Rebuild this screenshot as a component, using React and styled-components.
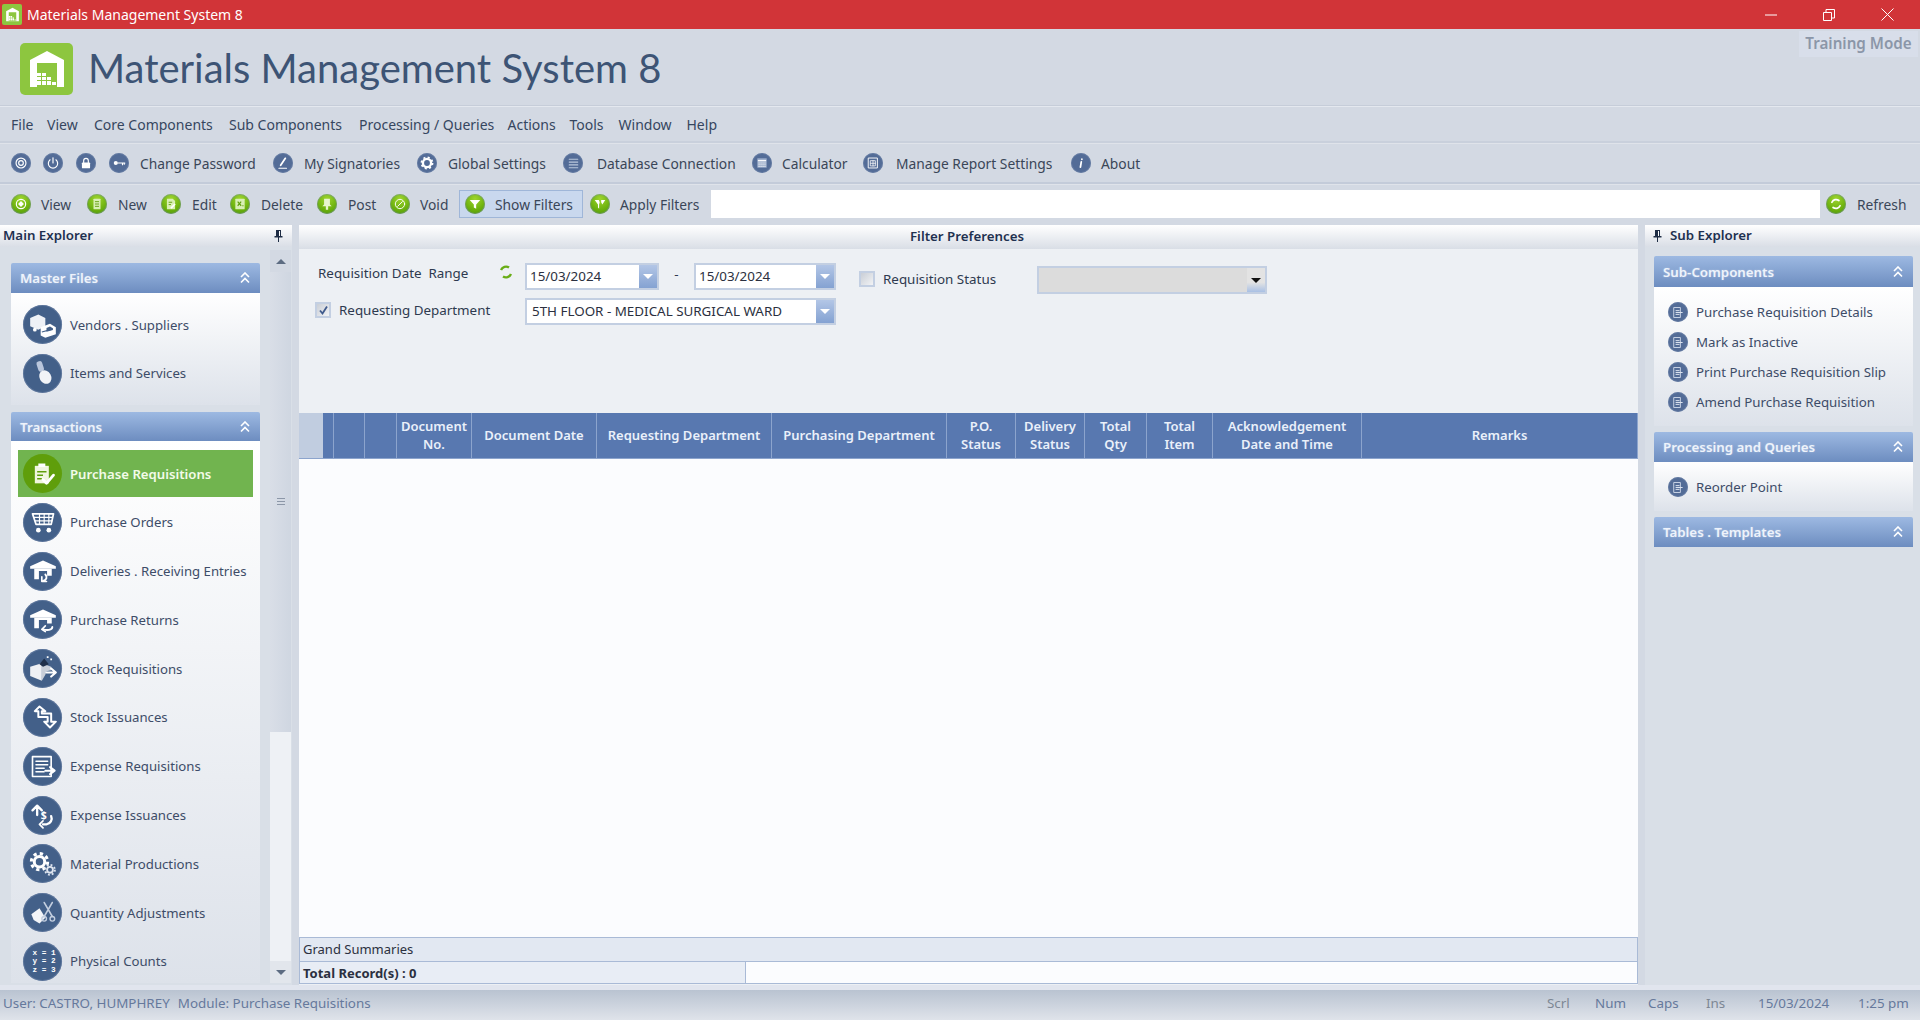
import styled, { createGlobalStyle } from "styled-components";

const GlobalStyle = createGlobalStyle`
  * { box-sizing: border-box; }
  html, body { margin: 0; padding: 0; height: 100%; overflow: hidden; }
  body { font-family: "Noto Sans", "Open Sans", sans-serif; font-size: 14px; color: #3c4a60; background: #d3d9e3; }
`;

const Shell = styled.div`
  display: flex;
  flex-direction: column;
  width: 1920px;
  height: 1020px;
  overflow: hidden;
`;

const TitleBar = styled.div`
  display: flex;
  align-items: center;
  height: 29px;
  flex: none;
  padding-left: 2px;
  background: #d13438;
  color: #fff;
  font-size: 14px;
`;

const TitleIcon = styled.span`
  width: 20px;
  height: 21px;
  margin-right: 5px;
  border-radius: 2px;
  background: #8dc63f;
  display: flex;
  align-items: center;
  justify-content: center;
`;

const WindowControls = styled.div`
  display: flex;
  margin-left: auto;
  padding-right: 26px;
  gap: 46px;
  align-items: center;
`;

const Header = styled.header`
  display: flex;
  align-items: flex-start;
  height: 77px;
  flex: none;
  border-bottom: 1px solid #c6cdd9;
`;

const Logo = styled.div`
  width: 53px;
  height: 52px;
  margin: 14px 15px 0 20px;
  border-radius: 5px;
  background: #8dc63f;
  display: flex;
  align-items: center;
  justify-content: center;
`;

const AppName = styled.h1`
  margin: 13px 0 0;
  font-family: "Lato", sans-serif;
  font-weight: 400;
  font-size: 40px;
  line-height: 52px;
  color: #3d5475;
  white-space: nowrap;
`;

const TrainingMode = styled.div`
  margin: 2px 2px 0 auto;
  width: 119px;
  height: 26px;
  background: #d8deea;
  color: #8b96a8;
  font-size: 15.2px;
  font-weight: 600;
  line-height: 25px;
  text-align: center;
  white-space: nowrap;
`;

const MenuBar = styled.nav`
  display: flex;
  align-items: center;
  height: 37px;
  flex: none;
  padding: 0 0 0 11px;
  border-top: 1px solid #e4e8ef;
  border-bottom: 2px solid #c9d0dc;
`;

const MenuItem = styled.span`
  width: ${({ $w }) => $w}px;
  flex: none;
  white-space: nowrap;
  color: #36465f;
`;

const ToolBar = styled.div`
  display: flex;
  align-items: center;
  height: ${({ $h }) => $h}px;
  flex: none;
  padding: 0 0 ${({ $under }) => $under ?? 0}px 11px;
  border-top: 1px solid #dfe3ea;
  border-bottom: ${({ $line }) => ($line ? "2px solid #c3cbd9" : "none")};
  font-size: 13.8px;
`;

const ToolButton = styled.div`
  display: flex;
  align-items: center;
  flex: none;
  width: ${({ $w }) => ($w ? `${$w}px` : "auto")};
  padding-left: ${({ $left }) => $left ?? 0}px;
  gap: ${({ $gap }) => $gap ?? 11}px;
  white-space: nowrap;
  color: #3a4658;
`;

const FilterToggle = styled(ToolButton)`
  width: 124px;
  height: 28px;
  padding-left: 5px;
  gap: 10px;
  background: #c9d8ee;
  border: 1px solid #9fb6d8;
`;

const SearchBox = styled.div`
  flex: 1;
  height: 28px;
  background: #fff;
`;

const Disc = styled.span`
  flex: none;
  display: inline-flex;
  align-items: center;
  justify-content: center;
  width: ${({ $size }) => $size ?? 20}px;
  height: ${({ $size }) => $size ?? 20}px;
  border-radius: 50%;
  background: ${({ $tone }) =>
    $tone === "green"
      ? "radial-gradient(circle at 50% 25%, #9ed52f 0%, #6fb310 55%, #4b9505 100%)"
      : $tone === "active"
        ? "#5f9e0b"
        : $tone === "big"
          ? "#436089"
          : "#536c97"};
  box-shadow: ${({ $tone }) => ($tone === "active" ? "none" : "0 0 0 1px rgba(120, 140, 175, 0.45) inset")};
`;

const Workspace = styled.div`
  display: flex;
  height: 760px;
  flex: none;
  gap: 7px;
`;

const SidePanel = styled.aside`
  display: flex;
  flex-direction: column;
  flex: none;
  width: ${({ $w }) => $w}px;
  background: #d9dfe7;
`;

const PanelHead = styled.div`
  display: flex;
  align-items: center;
  justify-content: ${({ $center }) => ($center ? "center" : "flex-start")};
  height: ${({ $h }) => $h ?? 22}px;
  flex: none;
  padding: 0 ${({ $right }) => $right ?? 3}px 2px ${({ $pad }) => $pad ?? 3}px;
  gap: 8px;
  background: linear-gradient(#ffffff, #d9dee6);
  color: #1f3150;
  font-size: 13.3px;
  font-weight: 600;
`;

const PinSlot = styled.span`
  display: flex;
  margin-left: ${({ $end }) => ($end ? "auto" : 0)};
  margin-right: ${({ $end }) => ($end ? "6px" : 0)};
`;

const LeftBody = styled.div`
  display: flex;
  flex: 1;
  min-height: 0;
`;

const GroupColumn = styled.div`
  width: 249px;
  margin: 16px 10px 0 11px;
  flex: none;
  display: flex;
  flex-direction: column;
  gap: 7px;
`;

const SubGroupColumn = styled(GroupColumn)`
  width: 259px;
  margin: 9px 0 0 9px;
  gap: 6px;
`;

const GroupHead = styled.div`
  display: flex;
  align-items: center;
  justify-content: space-between;
  height: ${({ $h }) => $h ?? 30}px;
  flex: none;
  padding: 0 10px 0 9px;
  border-radius: 2px 2px 0 0;
  background: linear-gradient(#9db9e2, #6d8dc0);
  color: #eef3fb;
  font-size: 13.3px;
  font-weight: 600;
  text-shadow: 0 0 2px rgba(255, 255, 255, 0.35);
`;

const GroupBody = styled.div`
  height: ${({ $h }) => $h}px;
  padding-top: ${({ $top }) => $top}px;
  background: linear-gradient(#ffffff, #dde2ea);
  overflow: hidden;
`;

const NavItem = styled.div`
  display: flex;
  align-items: center;
  height: 47px;
  margin: 0 7px 1.8px;
  padding-left: 5px;
  gap: 8px;
  font-size: 13.2px;
  white-space: nowrap;
  background: ${({ $active }) => ($active ? "#71b44f" : "transparent")};
  color: ${({ $active }) => ($active ? "#f3fbe9" : "#3d4c68")};
  font-weight: ${({ $active }) => ($active ? 600 : 400)};
`;

const SubItem = styled.div`
  display: flex;
  align-items: center;
  height: 30px;
  padding-left: 14px;
  gap: 8px;
  font-size: 13.3px;
  white-space: nowrap;
  color: #3d4c68;
`;

const ScrollBar = styled.div`
  display: flex;
  flex-direction: column;
  width: 21px;
  flex: none;
  margin: 3px 0 2px;
`;

const ScrollArrow = styled.div`
  height: 22px;
  flex: none;
  display: flex;
  align-items: center;
  justify-content: center;
  background: ${({ $down }) => ($down ? "#e2e6ec" : "#d3d9e3")};
  &::after {
    content: "";
    border-left: 5px solid transparent;
    border-right: 5px solid transparent;
    ${({ $down }) => ($down ? "border-top: 5px solid #5d6c82;" : "border-bottom: 5px solid #5d6c82;")}
  }
`;

const ScrollThumb = styled.div`
  height: 460px;
  flex: none;
  display: flex;
  align-items: center;
  justify-content: center;
  background: linear-gradient(90deg, #d9dee7, #cfd6e1);
`;

const ThumbGrip = styled.span`
  width: 8px;
  height: 8px;
  background: repeating-linear-gradient(#8c97a8 0 1px, transparent 1px 3px);
`;

const ScrollTrack = styled.div`
  flex: 1;
  background: #eef1f5;
`;

const CenterPanel = styled.main`
  display: flex;
  flex-direction: column;
  flex: none;
  width: 1339px;
  padding-bottom: 1px;
  background: #edf0f4;
`;

const FilterForm = styled.div`
  height: 164px;
  flex: none;
  padding-top: 14px;
  font-size: 13.4px;
  color: #2e3a4f;
`;

const FilterRow = styled.div`
  display: flex;
  align-items: flex-start;
  height: ${({ $h }) => $h}px;
  padding-left: ${({ $left }) => $left}px;
`;

const Caption = styled.label`
  flex: none;
  width: ${({ $w }) => $w}px;
  margin-top: ${({ $top }) => $top ?? 0}px;
  line-height: 20px;
  white-space: nowrap;
`;

const Spinner = styled.span`
  flex: none;
  display: flex;
  width: 16px;
  height: 16px;
  margin: 1px 11px 0 0;
`;

const Combo = styled.div`
  display: flex;
  flex: none;
  width: ${({ $w }) => $w}px;
  height: ${({ $h }) => $h ?? 27}px;
  margin-top: ${({ $top }) => $top ?? 0}px;
  border: 2px solid #c3cfe2;
  background: ${({ $off }) => ($off ? "#dcdcdc" : "#fff")};
`;

const ComboText = styled.span`
  flex: 1;
  padding-left: ${({ $pad }) => $pad ?? 3}px;
  line-height: 23px;
  white-space: nowrap;
  overflow: hidden;
  color: #2b3040;
`;

const ComboButton = styled.span`
  width: 18px;
  flex: none;
  display: flex;
  align-items: center;
  justify-content: center;
  background: ${({ $off }) => ($off ? "linear-gradient(#e3e3e3 60%, #a9c0e4)" : "linear-gradient(#b3c6e6, #84a2d2)")};
  &::after {
    content: "";
    border-left: 5px solid transparent;
    border-right: 5px solid transparent;
    border-top: 5px solid ${({ $off }) => ($off ? "#111" : "#fff")};
  }
`;

const Dash = styled.span`
  width: 35px;
  flex: none;
  text-align: center;
  line-height: 22px;
`;

const Check = styled.span`
  flex: none;
  display: flex;
  align-items: center;
  justify-content: center;
  width: 16px;
  height: 16px;
  margin: ${({ $top }) => $top ?? 0}px ${({ $right }) => $right}px 0 ${({ $left }) => $left ?? 0}px;
  border: 2px solid #c3cfe2;
  background: linear-gradient(135deg, #c9ced6, #f2f3f5);
`;

const GridHead = styled.div`
  display: grid;
  grid-template-columns: 24px 11px 31px 32px 75px 125px 175px 175px 69px 69px 62px 66px 149px 1fr;
  height: 46px;
  flex: none;
`;

const HeadCell = styled.div`
  display: flex;
  align-items: center;
  justify-content: center;
  background: ${({ $gutter }) => ($gutter ? "#c1cde0" : "#5878b0")};
  border-right: ${({ $gutter }) => ($gutter ? "none" : "1px solid #8ca4cd")};
  border-bottom: 1px solid #8ca4cd;
  color: #eaf0fa;
  font-size: 13px;
  font-weight: 600;
  line-height: 17.5px;
  text-align: center;
  white-space: pre-line;
`;

const GridBody = styled.div`
  flex: 1;
  background: #fbfcfe;
`;

const SummaryRow = styled.div`
  display: flex;
  flex: none;
  height: ${({ $h }) => $h}px;
  border: 1px solid #a9bad6;
  border-top: ${({ $open }) => ($open ? "none" : "1px solid #a9bad6")};
  background: ${({ $fill }) => $fill};
  font-size: 13px;
  color: #2b3040;
  line-height: 22px;
`;

const SummaryLabel = styled.span`
  width: ${({ $w }) => ($w ? `${$w}px` : "auto")};
  padding-left: 3px;
  font-weight: ${({ $bold }) => ($bold ? 700 : 400)};
  white-space: nowrap;
`;

const SummaryValue = styled.span`
  flex: 1;
  background: #fbfcfe;
  border-left: 1px solid #a9bad6;
`;

const FooterGap = styled.div`
  height: 5px;
  flex: none;
  background: #e1e5ee;
`;

const StatusBar = styled.footer`
  display: flex;
  align-items: center;
  height: 30px;
  flex: none;
  padding: 0 0 4px 3px;
  background: linear-gradient(#b9c3d1, #dfe3ea);
  font-size: 13.4px;
  white-space: nowrap;
`;

const StatusCell = styled.span`
  flex: none;
  width: ${({ $w }) => ($w ? `${$w}px` : "auto")};
  margin-left: ${({ $ml }) => $ml ?? 0}px;
  color: ${({ $dim }) => ($dim ? "#7d8794" : "#66799c")};
`;

const StatusPush = styled.span`
  flex: 1;
`;

const W = { fill: "none", stroke: "#fff", strokeWidth: 2, strokeLinecap: "round", strokeLinejoin: "round" };

const Glyph = ({ size = 14, children }) => (
  <svg width={size} height={size} viewBox="0 0 24 24" aria-hidden="true">
    {children}
  </svg>
);

const glyphs = {
  target: <><circle cx="12" cy="12" r="8.5" {...W} /><circle cx="12" cy="12" r="4" {...W} /></>,
  power: <><path d="M7 6.5a8 8 0 1 0 10 0" {...W} /><path d="M12 3v9" {...W} /></>,
  lock: <><path d="M8 11V8a4 4 0 0 1 8 0v3" {...W} /><rect x="5" y="11" width="14" height="10" rx="1.5" fill="#fff" /></>,
  key: <><circle cx="6.5" cy="12" r="3.5" fill="#fff" /><path d="M10 12h12M18 12v3M21 12v2" {...W} /></>,
  pen: <><path d="M8 16L16 4" {...W} strokeWidth="3" /><path d="M5 21h13" {...W} /></>,
  gear: <><circle cx="12" cy="12" r="7" fill="none" stroke="#fff" strokeWidth="4" /><circle cx="12" cy="12" r="9.5" fill="none" stroke="#fff" strokeWidth="3" strokeDasharray="3.5 3.96" /></>,
  lines: <path d="M6 6h12M6 10h12M6 14h12M6 18h12" {...W} strokeWidth="1.6" stroke="#b9c6dc" />,
  calc: <><rect x="4" y="4" width="16" height="16" fill="#9fb0cc" /><path d="M5 8h14" stroke="#fff" strokeWidth="2" /><path d="M6 12h12M6 15h12M6 18h12" stroke="#fff" strokeWidth="1.4" strokeDasharray="2 1.4" /></>,
  report: <><rect x="4.5" y="3.5" width="15" height="17" {...W} strokeWidth="1.6" /><path d="M8 8h8v9H8zM8 12.5h8M12 8v9" {...W} strokeWidth="1.3" /></>,
  info: <path d="M13.5 5.5v.2M12.5 10l-1.5 9" {...W} strokeWidth="3" />,
  diamond: <><circle cx="12" cy="12" r="8" {...W} /><path d="M12 7l5 5-5 5-5-5z" fill="#fff" /></>,
  doc: <><rect x="6" y="3" width="12" height="18" rx="1" fill="#d9efb4" /><path d="M8.5 8h7M8.5 12h7M8.5 16h7" stroke="#5f9e0b" strokeWidth="1.6" /></>,
  edit: <><path d="M5 3h10l4 4v14H5z" fill="#d9efb4" /><path d="M8 9h6M8 13h4" stroke="#5f9e0b" strokeWidth="1.6" /><path d="M12 19l7-7" stroke="#fff" strokeWidth="3" /></>,
  cross: <><rect x="4" y="3" width="16" height="18" rx="1" fill="#d9efb4" /><path d="M8 8l6 7M14 8l-6 7" stroke="#5f9e0b" strokeWidth="2" /><path d="M16 15h2" stroke="#5f9e0b" strokeWidth="2" /></>,
  pin: <path d="M7 3h10v10l3 3H14v6h-4v-6H4l3-3z" fill="#e8f5cf" />,
  slash: <><circle cx="12" cy="12" r="8" {...W} strokeWidth="1.6" /><path d="M8 16l8-8" {...W} strokeWidth="1.6" /></>,
  funnel: <path d="M3 5h18l-7 8v7l-4-2v-5z" fill="#fff" />,
  apply: <path d="M3 5h7l1.5 4-1 4v7l-2-2v-5zM14 5h7l-5 8-2-4z" fill="#fff" />,
  refresh: <><path d="M5 9a8 8 0 0 1 12-3" {...W} strokeWidth="3" /><path d="M19 15a8 8 0 0 1-12 3" {...W} strokeWidth="3" /></>,
  subdoc: <><path d="M5 4h10v16H5z" {...W} stroke="#c4cfe2" strokeWidth="1.6" /><path d="M8 9h5M8 12h10M8 15h5" {...W} stroke="#dbe3ef" strokeWidth="1.6" /></>,
  truck: <><path d="M1 6l7-3 6 3v7l-6 3-7-3z" fill="#eef1f6" /><path d="M10 14l8-3 5 3v6l-9 3-4-2z" fill="#fff" /><path d="M15 14.5l3-1.2 2.5 1.500v1.500l-5.500 1.500z" fill="#436089" /><circle cx="5" cy="16" r="1.6" fill="#fff" /><path d="M11 18l9-2.5" stroke="#436089" strokeWidth="1" /></>,
  items: <><rect x="7" y="2" width="5" height="9" rx="2" transform="rotate(-18 9 6)" fill="#b9c6dc" /><ellipse cx="14" cy="15.5" rx="5" ry="6" transform="rotate(-30 14 15.5)" fill="#f1f3f7" /></>,
  clip: <><path d="M5 5h12v15H5z" fill="#f0f6df" /><rect x="8" y="3" width="6" height="3" fill="#fff" /><path d="M7 10h8M7 13h5M7 16h4" stroke="#5f9e0b" strokeWidth="1.3" /><path d="M12 17l3 3 6-7" {...W} strokeWidth="2.4" /></>,
  cart: <><path d="M3 5h18l-2 9H6z" {...W} strokeWidth="1.5" /><path d="M4 8h16M5 11h15M9 5v9M13 5v9M17 5v9" stroke="#fff" strokeWidth="1" /><circle cx="8" cy="19" r="2" fill="#fff" /><circle cx="17" cy="19" r="2" fill="#fff" /></>,
  dock: <><path d="M1 8l11-5 11 5v2H1z" fill="#fff" /><path d="M4.500 10v9h4V12h7v4h4v-6" fill="#fff" /><path d="M14 15c2 2 1 5-2 5.500" {...W} strokeWidth="1.600" /><path d="M11 17v4h4" {...W} strokeWidth="1.400" /></>,
  dockback: <><path d="M1 8l11-5 11 5v2H1z" fill="#fff" /><path d="M4.500 10v9h4V12h7v3h4v-5" fill="#fff" /><path d="M20 18c0 3-5 3-8 2" {...W} strokeWidth="1.600" /><path d="M14 17l-3 3 3 2" {...W} strokeWidth="1.400" /></>,
  box: <><path d="M1 10l10-3v15L1 18z" fill="#eef0f4" /><path d="M11 7l8 3v3l-4 1-1 3-3 5z" fill="#c9cfd9" /><path d="M9 8l4-5 4 5-5 2z" fill="#1f2f4a" /><path d="M16 1v1.500M19 3v1.500" stroke="#fff" strokeWidth="1.5" /><path d="M15 15h8M19 11.5l4 3.500-4 3.500" {...W} strokeWidth="1.8" /></>,
  swap: <path d="M9 3L5 7h3v5h8v4h-3l5 5 5-5h-4v-7H11V7h3z" fill="none" stroke="#fff" strokeWidth="1.7" strokeLinejoin="round" />,
  form: <><rect x="3" y="4" width="16" height="17" {...W} strokeWidth="1.4" /><path d="M6 8h10M6 11h10M6 14h7M6 17h7" {...W} strokeWidth="1.3" /><path d="M14 16h6M18 13l4 3-4 3" {...W} strokeWidth="1.7" /></>,
  money: <><path d="M7 12V5M3 8l4-4 4 4" {...W} /><path d="M12 20h3a5 5 0 0 0 4-7" {...W} /><path d="M12 17l-3 3 3 3" {...W} strokeWidth="1.5" /><text x="10" y="15" fontSize="9" fontWeight="700" fill="#fff" fontFamily="Noto Sans, sans-serif">$</text></>,
  gears: <><circle cx="9" cy="10" r="4.5" fill="none" stroke="#fff" strokeWidth="2.6" /><circle cx="9" cy="10" r="7" fill="none" stroke="#fff" strokeWidth="2.6" strokeDasharray="2.8 2.7" /><circle cx="18" cy="17" r="2.5" fill="none" stroke="#dfe5ef" strokeWidth="1.6" /><circle cx="18" cy="17" r="4.2" fill="none" stroke="#dfe5ef" strokeWidth="1.6" strokeDasharray="1.6 1.7" /></>,
  scissors: <><path d="M2 13l7-5 5 8-5 5-5-3z" fill="#f2f4f8" /><path d="M13 3l7 12M20 3l-7 12" {...W} stroke="#c3cedf" strokeWidth="1.3" /><circle cx="13" cy="17" r="2" {...W} stroke="#c3cedf" strokeWidth="1.2" /><circle cx="20" cy="17" r="2" {...W} stroke="#c3cedf" strokeWidth="1.2" /></>,
  counts: <g fill="#fff" fontSize="6.6" fontFamily="Liberation Mono, monospace" fontWeight="700"><text x="3" y="7">x = 1</text><text x="3" y="14">y = 2</text><text x="3" y="21">z = 3</text></g>,
};

const Icon = ({ name, tone, size, scale = 0.7 }) => (
  <Disc $tone={tone} $size={size}>
    <Glyph size={Math.round((size ?? 20) * scale)}>{glyphs[name]}</Glyph>
  </Disc>
);

const Warehouse = ({ size }) => (
  <svg width={size} height={size} viewBox="0 0 40 40" aria-hidden="true">
    <path d="M3 11L20 2l17 9v27H3z" fill="#fff" />
    <path d="M10 14h20v24H10z" fill="#8dc63f" />
    <path d="M10 24h4v3h-4zM15 24h4v3h-4zM10 28h4v3h-4zM15 28h4v3h-4zM20 28h4v3h-4zM10 32h4v4h-4zM15 32h4v4h-4zM20 32h4v4h-4zM25 33h4v3h-4z" fill="#fff" />
  </svg>
);

const Pin = () => (
  <svg width="9" height="13" viewBox="0 0 9 13" aria-hidden="true">
    <path d="M2 1h5v6h1.500v1.500h-8V7H2zM4 8.500h1V13H4z" fill="#1f2d45" />
    <path d="M5.500 2v5" stroke="#fff" strokeWidth="1" />
  </svg>
);

const Chevrons = () => (
  <svg width="10" height="12" viewBox="0 0 10 12" aria-hidden="true">
    <path d="M1 5l4-4 4 4M1 10.500l4-4 4 4" fill="none" stroke="#fff" strokeWidth="1.6" />
  </svg>
);

const SmallSpinner = () => (
  <svg width="16" height="16" viewBox="0 0 16 16" aria-hidden="true">
    <path d="M3 6a5.500 5.500 0 0 1 8-2.500M13 10a5.500 5.500 0 0 1-8 2.500" fill="none" stroke="#69ad16" strokeWidth="2.4" />
  </svg>
);

const menu = [
  ["File", 36], ["View", 47], ["Core Components", 135], ["Sub Components", 130],
  ["Processing / Queries", 148.5], ["Actions", 62], ["Tools", 49], ["Window", 68], ["Help", 60],
];

const systemTools = [
  { icon: "target", w: 32 }, { icon: "power", w: 33 }, { icon: "lock", w: 33 },
  { icon: "key", label: "Change Password", w: 164 },
  { icon: "pen", label: "My Signatories", w: 144 },
  { icon: "gear", label: "Global Settings", w: 146 },
  { icon: "lines", label: "Database Connection", w: 189, gap: 14, scale: 0.85 },
  { icon: "calc", label: "Calculator", w: 111, gap: 10 },
  { icon: "report", label: "Manage Report Settings", w: 208, gap: 13 },
  { icon: "info", label: "About", gap: 10 },
];

const recordTools = [
  { icon: "diamond", label: "View", w: 76, gap: 10 },
  { icon: "doc", label: "New", w: 74 },
  { icon: "edit", label: "Edit", w: 69 },
  { icon: "cross", label: "Delete", w: 87 },
  { icon: "pin", label: "Post", w: 73 },
  { icon: "slash", label: "Void", w: 69, gap: 10 },
];

const masterFiles = [
  ["truck", "Vendors . Suppliers"],
  ["items", "Items and Services"],
];

const transactions = [
  ["clip", "Purchase Requisitions", true],
  ["cart", "Purchase Orders"],
  ["dock", "Deliveries . Receiving Entries"],
  ["dockback", "Purchase Returns"],
  ["box", "Stock Requisitions"],
  ["swap", "Stock Issuances"],
  ["form", "Expense Requisitions"],
  ["money", "Expense Issuances"],
  ["gears", "Material Productions"],
  ["scissors", "Quantity Adjustments"],
  ["counts", "Physical Counts"],
];

const columns = [
  "", "", "", "", "Document\nNo.", "Document Date", "Requesting Department", "Purchasing Department",
  "P.O.\nStatus", "Delivery\nStatus", "Total\nQty", "Total\nItem", "Acknowledgement\nDate and Time", "Remarks",
];

const subComponents = [
  "Purchase Requisition Details", "Mark as Inactive", "Print Purchase Requisition Slip", "Amend Purchase Requisition",
];

function NavRow({ icon, label, active }) {
  return (
    <NavItem $active={active}>
      <Icon name={icon} tone={active ? "active" : "big"} size={39} scale={0.72} />
      {label}
    </NavItem>
  );
}

function SubRow({ label }) {
  return (
    <SubItem>
      <Icon name="subdoc" size={20} scale={0.75} />
      {label}
    </SubItem>
  );
}

export default function App() {
  return (
    <Shell>
      <GlobalStyle />
      <TitleBar>
        <TitleIcon>
          <Warehouse size={15} />
        </TitleIcon>
        Materials Management System 8
        <WindowControls>
          <svg width="12" height="12" viewBox="0 0 12 12" aria-hidden="true">
            <path d="M0 6h12" stroke="#fff" strokeWidth="1" />
          </svg>
          <svg width="12" height="12" viewBox="0 0 12 12" aria-hidden="true">
            <path d="M.5 3.500h8v8h-8zM3 3.500V.5h8.500V9H8.500" fill="none" stroke="#fff" strokeWidth="1" />
          </svg>
          <svg width="13" height="13" viewBox="0 0 13 13" aria-hidden="true">
            <path d="M.5.5l12 12M12.500.5l-12 12" stroke="#fff" strokeWidth="1" />
          </svg>
        </WindowControls>
      </TitleBar>

      <Header>
        <Logo>
          <Warehouse size={40} />
        </Logo>
        <AppName>Materials Management System 8</AppName>
        <TrainingMode>Training Mode</TrainingMode>
      </Header>

      <MenuBar>
        {menu.map(([label, w]) => (
          <MenuItem key={label} $w={w}>{label}</MenuItem>
        ))}
      </MenuBar>

      <ToolBar $h={41} $line>
        {systemTools.map((t) => (
          <ToolButton key={t.icon} $w={t.w} $gap={t.gap}>
            <Icon name={t.icon} scale={t.scale} />
            {t.label}
          </ToolButton>
        ))}
      </ToolBar>

      <ToolBar $h={41} $under={2}>
        {recordTools.map((t) => (
          <ToolButton key={t.label} $w={t.w} $gap={t.gap}>
            <Icon name={t.icon} tone="green" />
            {t.label}
          </ToolButton>
        ))}
        <FilterToggle>
          <Icon name="funnel" tone="green" />
          Show Filters
        </FilterToggle>
        <ToolButton $w={128} $left={7} $gap={10}>
          <Icon name="apply" tone="green" />
          Apply Filters
        </ToolButton>
        <SearchBox />
        <ToolButton $w={100} $left={6}>
          <Icon name="refresh" tone="green" />
          Refresh
        </ToolButton>
      </ToolBar>

      <Workspace>
        <SidePanel $w={292}>
          <PanelHead>
            Main Explorer
            <PinSlot $end>
              <Pin />
            </PinSlot>
          </PanelHead>
          <LeftBody>
            <GroupColumn>
              <div>
                <GroupHead>
                  Master Files
                  <Chevrons />
                </GroupHead>
                <GroupBody $h={112} $top={8}>
                  {masterFiles.map(([icon, label]) => (
                    <NavRow key={label} icon={icon} label={label} />
                  ))}
                </GroupBody>
              </div>
              <div>
                <GroupHead $h={29}>
                  Transactions
                  <Chevrons />
                </GroupHead>
                <GroupBody $h={542} $top={9}>
                  {transactions.map(([icon, label, active]) => (
                    <NavRow key={label} icon={icon} label={label} active={active} />
                  ))}
                </GroupBody>
              </div>
            </GroupColumn>
            <ScrollBar>
              <ScrollArrow />
              <ScrollThumb>
                <ThumbGrip />
              </ScrollThumb>
              <ScrollTrack />
              <ScrollArrow $down />
            </ScrollBar>
          </LeftBody>
        </SidePanel>

        <CenterPanel>
          <PanelHead $center $h={24} $right={6}>Filter Preferences</PanelHead>
          <FilterForm>
            <FilterRow $h={35} $left={19}>
              <Caption $w={180}>Requisition Date&nbsp; Range</Caption>
              <Spinner>
                <SmallSpinner />
              </Spinner>
              <Combo $w={134}>
                <ComboText>15/03/2024</ComboText>
                <ComboButton />
              </Combo>
              <Dash>-</Dash>
              <Combo $w={142}>
                <ComboText>15/03/2024</ComboText>
                <ComboButton />
              </Combo>
              <Check $top={8} $left={23} $right={8} />
              <Caption $w={154} $top={6}>Requisition Status</Caption>
              <Combo $w={230} $h={28} $top={3} $off>
                <ComboText />
                <ComboButton $off />
              </Combo>
            </FilterRow>
            <FilterRow $h={27} $left={16}>
              <Check $top={4} $right={8}>
                <svg width="11" height="11" viewBox="0 0 11 11" aria-hidden="true">
                  <path d="M2 5.500l2.500 3L9 1.500" fill="none" stroke="#3f5a8c" strokeWidth="1.8" />
                </svg>
              </Check>
              <Caption $w={186} $top={2}>Requesting Department</Caption>
              <Combo $w={311}>
                <ComboText $pad={5}>5TH FLOOR - MEDICAL SURGICAL WARD</ComboText>
                <ComboButton />
              </Combo>
            </FilterRow>
          </FilterForm>
          <GridHead>
            {columns.map((title, i) => (
              <HeadCell key={i} $gutter={i === 0}>{title}</HeadCell>
            ))}
          </GridHead>
          <GridBody />
          <SummaryRow $h={25} $fill="#e2e8f2">
            <SummaryLabel>Grand Summaries</SummaryLabel>
          </SummaryRow>
          <SummaryRow $h={22} $open $fill="#e8edf5">
            <SummaryLabel $w={445} $bold>Total Record(s) : 0</SummaryLabel>
            <SummaryValue />
          </SummaryRow>
        </CenterPanel>

        <SidePanel $w={275}>
          <PanelHead $pad={8}>
            <PinSlot>
              <Pin />
            </PinSlot>
            Sub Explorer
          </PanelHead>
          <SubGroupColumn>
            <div>
              <GroupHead $h={31}>
                Sub-Components
                <Chevrons />
              </GroupHead>
              <GroupBody $h={139} $top={10}>
                {subComponents.map((label) => (
                  <SubRow key={label} label={label} />
                ))}
              </GroupBody>
            </div>
            <div>
              <GroupHead>
                Processing and Queries
                <Chevrons />
              </GroupHead>
              <GroupBody $h={49} $top={10}>
                <SubRow label="Reorder Point" />
              </GroupBody>
            </div>
            <GroupHead>
              Tables . Templates
              <Chevrons />
            </GroupHead>
          </SubGroupColumn>
        </SidePanel>
      </Workspace>

      <FooterGap />
      <StatusBar>
        <StatusCell>User: CASTRO, HUMPHREY</StatusCell>
        <StatusCell $ml={8}>Module: Purchase Requisitions</StatusCell>
        <StatusPush />
        <StatusCell $w={48} $dim>Scrl</StatusCell>
        <StatusCell $w={53}>Num</StatusCell>
        <StatusCell $w={58}>Caps</StatusCell>
        <StatusCell $w={52} $dim>Ins</StatusCell>
        <StatusCell $w={100}>15/03/2024</StatusCell>
        <StatusCell $w={62}>1:25 pm</StatusCell>
      </StatusBar>
    </Shell>
  );
}
